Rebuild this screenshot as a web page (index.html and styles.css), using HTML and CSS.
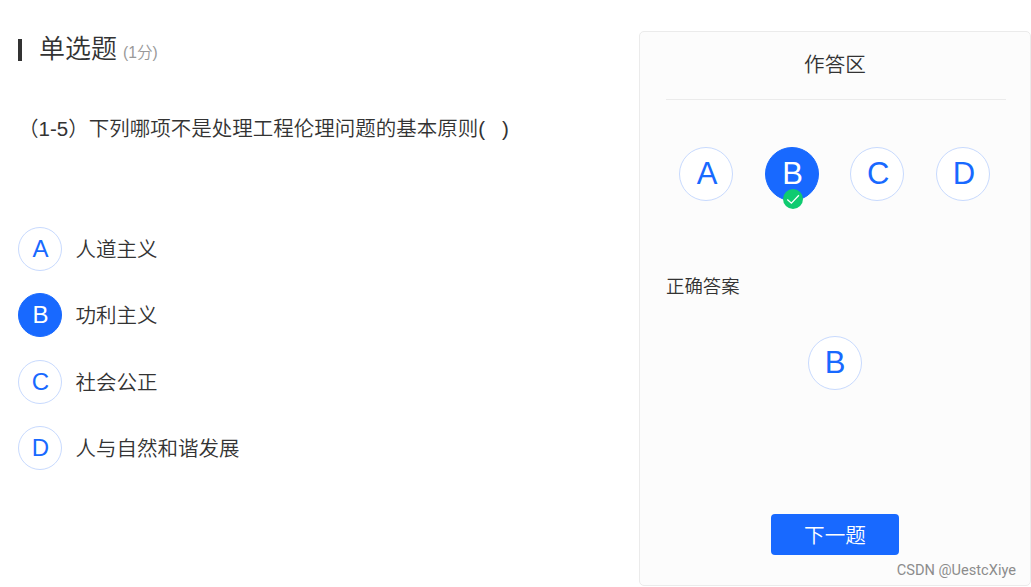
FILE: index.html
```html
<!DOCTYPE html>
<html lang="zh-CN">

<head>
    <meta charset="UTF-8">
    <meta name="viewport" content="width=device-width, initial-scale=1.0">
    <title>单选题</title>
    <link rel="stylesheet" href="styles.css">
</head>

<body>
    <div class="container">
        <div class="question">
            <h1 class="title">单选题<span class="score">(1分)</span></h1>
            <p class="subject">（1-5）下列哪项不是处理工程伦理问题的基本原则(&nbsp;&nbsp;&nbsp;)</p>
            <ul class="options">
                <li><span class="letter">A</span><span class="text">人道主义</span></li>
                <li><span class="letter active">B</span><span class="text">功利主义</span></li>
                <li><span class="letter">C</span><span class="text">社会公正</span></li>
                <li><span class="letter">D</span><span class="text">人与自然和谐发展</span></li>
            </ul>
        </div>

        <div class="panel">
            <h2 class="panel-title">作答区</h2>
            <div class="choices">
                <span class="letter big">A</span>
                <span class="letter big active">B
                    <svg class="check" viewBox="0 0 20 20">
                        <circle cx="10" cy="10" r="10" fill="#0fcb70" />
                        <path d="M4.3 10.4 L8.4 14.2 L15.9 6.2" fill="none" stroke="#fff" stroke-width="1.3" />
                    </svg>
                </span>
                <span class="letter big">C</span>
                <span class="letter big">D</span>
            </div>
            <p class="answer-label">正确答案</p>
            <div class="answer">
                <span class="letter big">B</span>
            </div>
            <button class="next">下一题</button>
            <span class="watermark">CSDN @UestcXiye</span>
        </div>
    </div>
</body>

</html>
```
FILE: styles.css
```css
* {
    box-sizing: border-box;
    margin: 0;
    padding: 0;
}

body {
    background-color: #fff;
    color: #333;
    font-family: "Liberation Sans", "Noto Sans CJK SC", sans-serif;
    font-weight: 350;
    font-size: 20.5px;
}

.container {
    display: flex;
    height: 587px;
    padding: 31px 0 1px 18px;
}

.question {
    flex: 1;
}

.title {
    display: flex;
    align-items: baseline;
    height: 36px;
    line-height: 36px;
    font-size: 26px;
    font-weight: 350;
}

.title::before {
    content: "";
    align-self: center;
    width: 4px;
    height: 22px;
    margin: 2px 17px 0 0;
    background-color: #333;
}

.score {
    margin-left: 6px;
    padding-bottom: 1px;
    color: #999;
    font-size: 15.6px;
}

.subject {
    height: 30px;
    margin-top: 47px;
    line-height: 30px;
    font-size: 20.5px;
    white-space: nowrap;
}

.options {
    display: flex;
    flex-direction: column;
    gap: 22.6px;
    margin-top: 82.5px;
    list-style: none;
}

.options li {
    display: flex;
    align-items: center;
    gap: 13.4px;
}

.text {
    padding-bottom: 2px;
}

.letter {
    display: flex;
    align-items: center;
    justify-content: center;
    position: relative;
    width: 44px;
    height: 44px;
    padding-left: 1px;
    border: 1px solid #c8dafe;
    border-radius: 50%;
    background-color: #fff;
    color: #1869ff;
    font-size: 24px;
}

.letter.big {
    width: 54px;
    height: 54px;
    padding-left: 2px;
    font-size: 31px;
}

.answer .letter.big {
    padding-left: 0;
}

.letter.active {
    border-color: #1869ff;
    background-color: #1869ff;
    color: #fff;
}

.check {
    position: absolute;
    left: 17px;
    bottom: -9px;
    width: 20px;
    height: 20px;
}

.panel {
    display: flex;
    flex-direction: column;
    position: relative;
    width: 392px;
    padding: 0 24px 30px 26px;
    border: 1px solid #ebebeb;
    border-radius: 5px;
    background-color: #fcfcfc;
}

.panel-title {
    height: 68px;
    padding-right: 2px;
    border-bottom: 1px solid #ebebeb;
    line-height: 66px;
    font-size: 20.6px;
    font-weight: 350;
    text-align: center;
}

.choices {
    display: flex;
    justify-content: space-between;
    margin-top: 47px;
    padding: 0 16px 0 13px;
}

.answer-label {
    margin-top: 71px;
    line-height: 30px;
    font-size: 18.4px;
}

.answer {
    display: flex;
    justify-content: center;
    margin-top: 34px;
    padding-right: 2px;
}

.next {
    align-self: center;
    width: 128px;
    height: 41px;
    margin-top: auto;
    margin-right: 2px;
    padding-bottom: 1px;
    border: none;
    border-radius: 4px;
    background-color: #1869ff;
    color: #fff;
    font-family: inherit;
    font-size: 20.6px;
    font-weight: 350;
}

.watermark {
    position: absolute;
    right: 14px;
    bottom: 6px;
    color: #8c8c8c;
    font-family: Roboto, "Liberation Sans", sans-serif;
    font-size: 14.6px;
    font-weight: 400;
}
```
